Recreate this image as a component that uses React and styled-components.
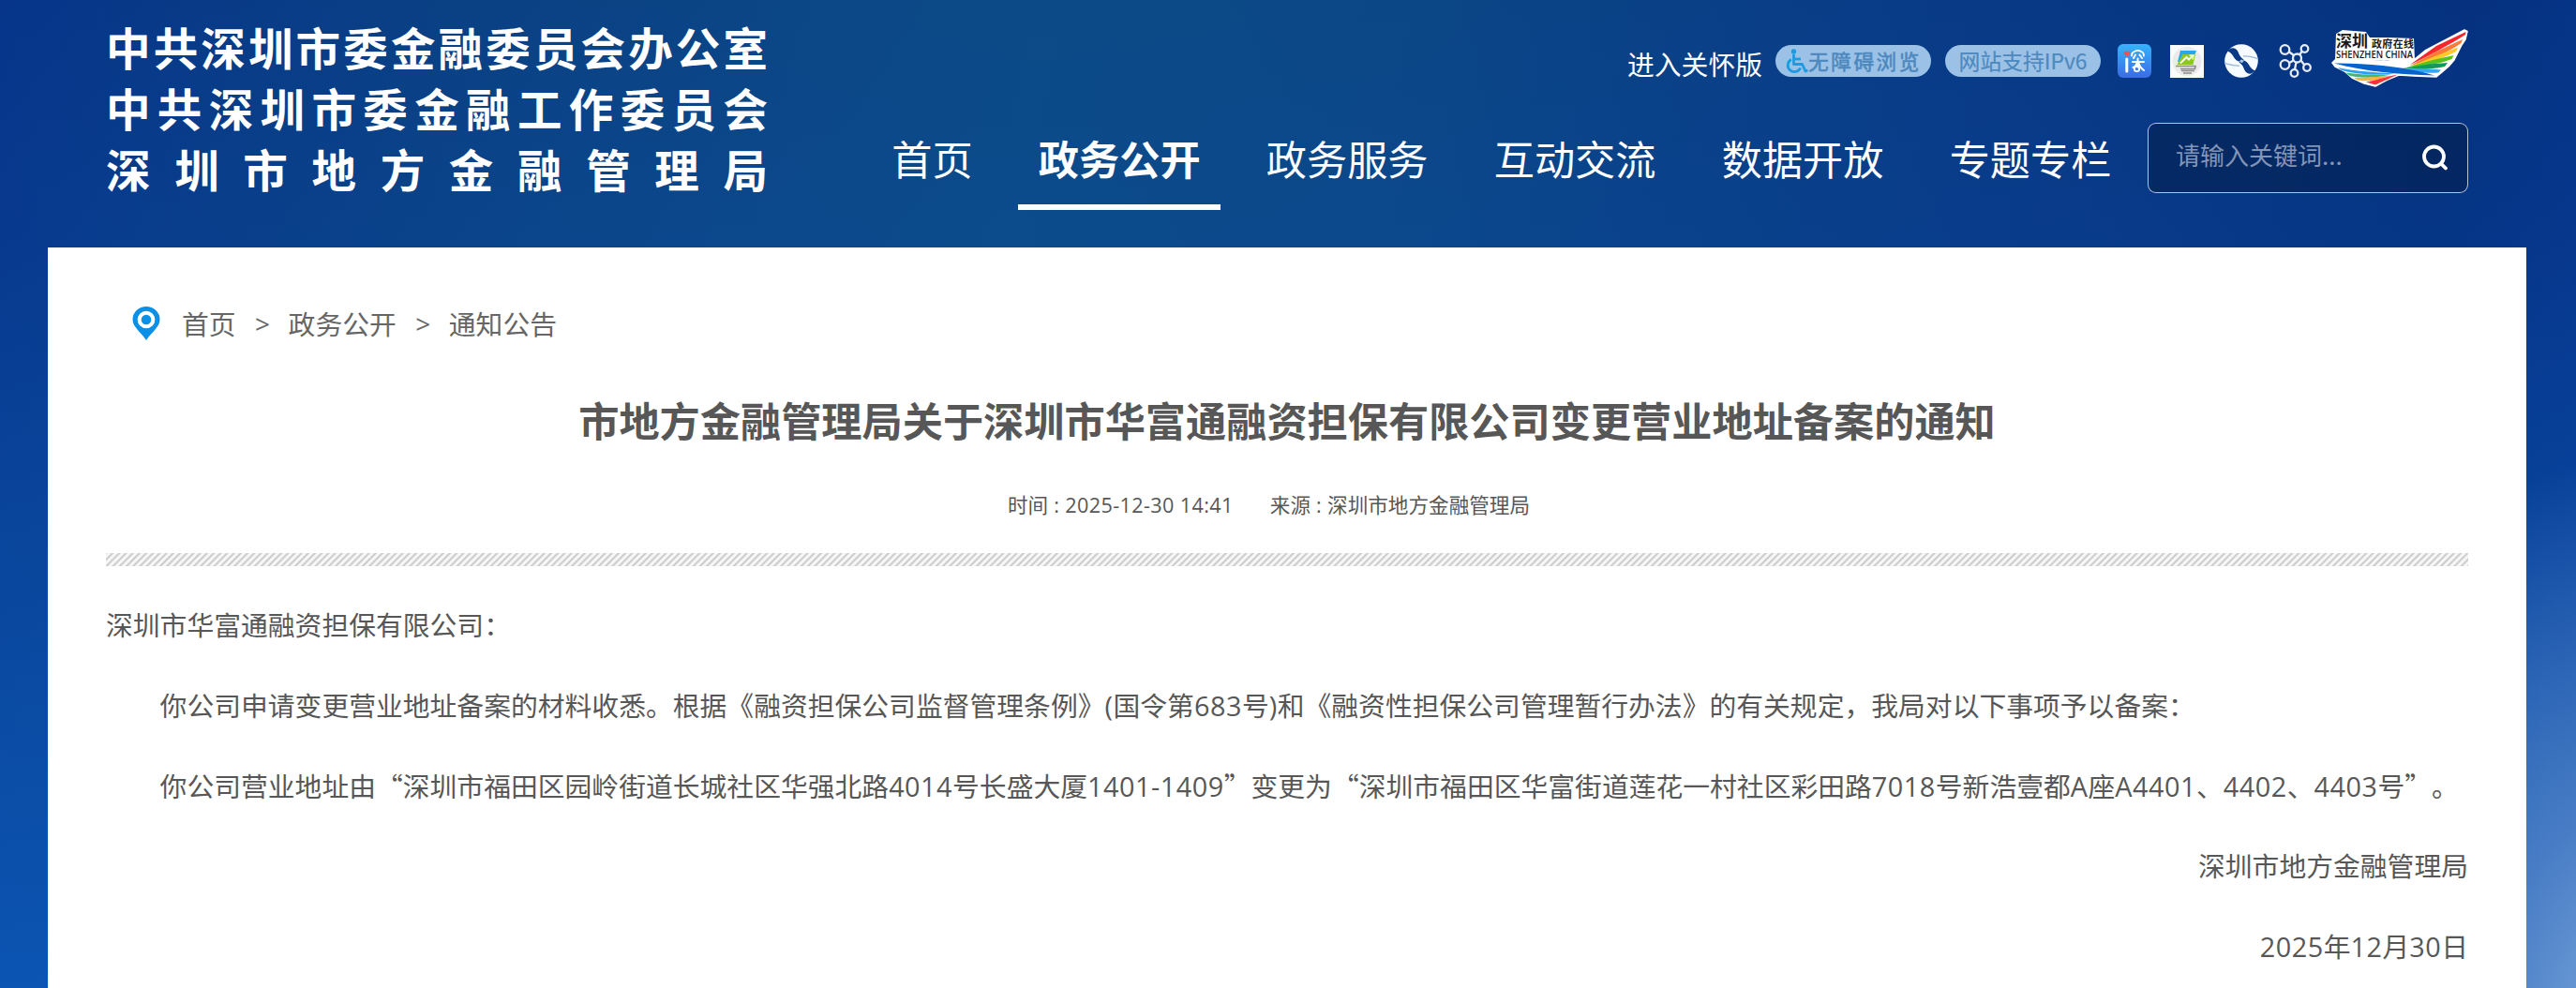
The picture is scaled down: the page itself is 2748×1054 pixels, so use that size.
import React from 'react';
import styled, { createGlobalStyle } from 'styled-components';

const colors = {
  text: '#575757',
  crumb: '#666',
  pill: '#9bc2e6',
  pillText: '#4d88be',
  accent: '#0a90e6'
};

const fonts = {
  base: '"Noto Sans CJK SC", sans-serif',
  latin: '"Open Sans", "Noto Sans CJK SC", sans-serif'
};

const GlobalStyle = createGlobalStyle`
  * {
    box-sizing: border-box;
  }

  body {
    margin: 0;
    font-family: ${fonts.base};
    color: ${colors.text};
    text-spacing-trim: space-all;
    overflow: hidden;
  }

  a {
    color: inherit;
    text-decoration: none;
  }

  svg {
    display: block;
    flex: none;
  }
`;

const Page = styled.div`
  width: 2748px;
  height: 1054px;
  overflow: hidden;
  background:
    radial-gradient(ellipse 330px 640px at 2790px 1130px, #7ba6dc 0%, rgba(84, 134, 202, 0.85) 40%, rgba(50, 104, 182, 0) 100%),
    linear-gradient(180deg, rgba(12, 86, 180, 0) 0%, rgba(12, 86, 180, 0.12) 25%, rgba(12, 86, 180, 0.95) 100%),
    linear-gradient(100deg, #06358a 0%, #0a4084 16%, #0c4a87 38%, #0b4686 52%, #083a86 72%, #05317f 90%, #063690 100%);
`;

const Header = styled.header`
  display: flex;
  justify-content: space-between;
  width: 2520px;
  height: 264px;
  margin-left: 113px;
`;

const Bureau = styled.h1`
  width: 706px;
  margin: 0;
  padding-top: 17px;
  font-size: 47.5px;
  font-weight: 700;
  line-height: 65px;
  color: #fff;
`;

const BureauLine = styled.span`
  display: block;
  text-align: justify;
  text-align-last: justify;
`;

const HeaderSide = styled.div`
  display: flex;
  flex-direction: column;
  align-items: flex-end;
`;

const Tools = styled.div`
  display: flex;
  align-items: center;
  height: 68px;
  margin-top: 31px;
`;

const CareLink = styled.a`
  margin-right: 14px;
  padding-top: 5px;
  font-size: 28.8px;
  line-height: 40px;
  color: #fff;
`;

const Pill = styled.a`
  display: flex;
  align-items: center;
  justify-content: center;
  width: 166px;
  height: 34px;
  margin-right: ${props => props.$gap}px;
  border-radius: 17px;
  background: ${colors.pill};
  color: ${colors.pillText};
  font-size: ${props => props.$size}px;
  letter-spacing: ${props => (props.$spaced ? 2.6 : 0)}px;
  line-height: 34px;
  -webkit-text-stroke: ${props => (props.$spaced ? 0.6 : 0.2)}px ${colors.pillText};
`;

const IconLink = styled.a`
  display: block;
  margin-right: ${props => props.$gap || 0}px;
`;

const LogoLink = styled.a`
  display: block;
  padding-bottom: 6px;
`;

const NavRow = styled.div`
  display: flex;
  align-items: flex-start;
  margin-top: 32px;
`;

const Nav = styled.nav`
  display: flex;
  gap: 27px;
  margin-right: 17px;
`;

const NavItem = styled.a`
  height: 93px;
  padding: 2px 21.6px 0;
  border-bottom: 6px solid ${props => (props.$active ? '#fff' : 'transparent')};
  font-size: 43.2px;
  font-weight: ${props => (props.$active ? 700 : 400)};
  line-height: 71px;
  color: #fff;
`;

const Search = styled.form`
  display: flex;
  align-items: center;
  justify-content: space-between;
  width: 342px;
  height: 75px;
  padding: 0 20px 0 29px;
  border: 1px solid rgba(255, 255, 255, 0.72);
  border-radius: 9px;
  background: rgba(3, 32, 76, 0.6);
`;

const SearchInput = styled.input`
  width: 220px;
  height: 60px;
  margin-bottom: 8px;
  padding: 0;
  border: 0;
  outline: 0;
  background: none;
  font-family: ${fonts.base};
  font-size: 26px;
  color: #fff;

  &::placeholder {
    color: #8295b7;
    opacity: 1;
  }
`;

const Panel = styled.main`
  width: 2644px;
  min-height: 790px;
  margin-left: 51px;
  padding: 0 62px;
  background: #fff;
`;

const Breadcrumb = styled.div`
  display: flex;
  align-items: center;
  height: 102px;
  padding: 60px 0 0 28px;
  font-size: 28.8px;
  line-height: 42px;
  color: ${colors.crumb};
`;

const CrumbText = styled.span`
  margin-left: ${props => props.$left || 0}px;
`;

const CrumbArrow = styled.span`
  width: 16px;
  margin: 0 19.5px 0 20.5px;
  font-family: ${fonts.latin};
  font-size: 28px;
`;

const Title = styled.h2`
  margin: 49px 0 0;
  font-size: 43.2px;
  font-weight: 700;
  line-height: 64px;
  text-align: center;
`;

const Meta = styled.div`
  display: flex;
  justify-content: center;
  gap: 39px;
  height: 32px;
  margin: 43px 39px 0 0;
  font-size: 21.6px;
  line-height: 32px;
`;

const Hatch = styled.div`
  height: 14px;
  margin-top: 36px;
  background: repeating-linear-gradient(135deg, #c4c4c4 0, #f4f4f4 1.6px, #fafafa 3.2px, #c4c4c4 5.09px);
`;

const Article = styled.article`
  padding-top: 33px;
  font-size: 28.8px;
`;

const Paragraph = styled.p`
  margin: 0 0 28.2px;
  line-height: 57.6px;
  text-indent: ${props => (props.$indent ? '2em' : 0)};
  text-align: ${props => (props.$right ? 'right' : 'left')};
  white-space: nowrap;
`;

const Latin = styled.span`
  font-family: ${fonts.latin};
  letter-spacing: 0.018em;
  line-height: 1;
`;

const navItems = ['首页', '政务公开', '政务服务', '互动交流', '数据开放', '专题专栏'];

function WheelchairIcon () {
  return (
    <svg width="25" height="27" viewBox="0 0 25 27" fill="none" stroke="#1d9ae2" strokeWidth="2.8" strokeLinejoin="round">
      <circle cx="9.5" cy="3" r="2.7" fill="#1d9ae2" stroke="none" />
      <path d="M9.5 6v10.5h9l3.5 7.5 2.5-1" />
      <path d="M10 11h7" />
      <path d="M6.8 11.5a7 7 0 1 0 9.8 9" />
    </svg>
  );
}

function IShenzhenIcon () {
  return (
    <svg width="36" height="36" viewBox="0 0 36 36">
      <defs>
        <linearGradient id="appBlue" x1="0" y1="0" x2="0" y2="1">
          <stop offset="0" stopColor="#35b4fb" />
          <stop offset="1" stopColor="#3c6be6" />
        </linearGradient>
      </defs>
      <rect width="36" height="36" rx="6" fill="url(#appBlue)" />
      <path d="M10 13.5 6.8 10.3a1.9 1.9 0 0 1 3.2-2 1.9 1.9 0 0 1 3.2 2z" fill="#f0524f" />
      <g fill="none" stroke="#fff" strokeLinecap="round" strokeLinejoin="round">
        <path d="M9.8 16v13" strokeWidth="3" />
        <path d="M15 12.5c0-2.5 1-4 3-4.5 2.5-1.5 5-1.500 7 0 2 .5 3 2 3 4.500" strokeWidth="1.8" />
        <path d="M19 11.5 17 15M23.5 11.5 26 15M16 19h12M21.5 15.5v9M20.5 20.5c-1 2.5-2 3.5-4 4.5M22.5 20.5c1 3.5 3 6 5.5 7.5" strokeWidth="2" />
        <circle cx="20.5" cy="26.5" r="2.7" strokeWidth="1.8" />
      </g>
    </svg>
  );
}

function ServiceIcon () {
  return (
    <svg width="36" height="35" viewBox="0 0 36 35">
      <rect width="36" height="35" fill="#fbfbfb" />
      <circle cx="18" cy="17.5" r="15.5" fill="#ebebeb" />
      <path d="M11 6h17l-1.5 4H14l-2.5 8H8z" fill="#28a9e6" />
      <path d="M13.5 10H27l-2.500 11H7.500z" fill="#8cc820" />
      <path d="M11 19.5 17.5 13l2.500 2.500 4-4" stroke="#f4fbe4" strokeWidth="2" fill="none" />
      <path d="M20.5 11h4.500l-1 4.500" stroke="#f4fbe4" strokeWidth="1.5" fill="none" />
      <path d="M6 22.5h21l-.5 3H11M12 27.500h14M14 30h9" stroke="#8d8d8d" strokeWidth="1.7" fill="none" />
    </svg>
  );
}

function SwirlIcon () {
  return (
    <svg width="36" height="36" viewBox="0 0 36 36">
      <circle cx="18" cy="18" r="17.8" fill="#f6fbff" />
      <g fill="#0a3a85">
        <path d="M3 7.500C6 4.500 9 3.500 11.500 5c4.500 2.500 3 8 9 11.500-1.500 3-6 3-9-.5C8.500 12.500 8.500 9.500 3 7.500Z" />
        <path d="M33 28.500c-3 3-6 4-8.500 2.500-4.500-2.500-3-8-9-11.500 1.500-3 6-3 9 .5 3 3.500 3 6.500 8.500 8.500Z" />
      </g>
      <path d="M0 20.500c4 1 8 3 16 2.500M36 15.500c-4-1-8-3-16-2.500" stroke="#9db9dc" strokeWidth="1.3" fill="none" />
      <circle cx="18.300" cy="18.300" r="1.800" fill="#a9c6e6" />
    </svg>
  );
}

function NetworkIcon () {
  return (
    <svg width="36" height="36" viewBox="0 0 36 36" fill="none" stroke="#e4ecf7" strokeWidth="2.3">
      <path d="M10.5 8 16 12M24.5 8l-2.500 3.500M10.500 20.500l5-3M23.500 17.500l4 5M18.500 19.500 17 27" />
      <circle cx="6.5" cy="6" r="4.8" />
      <circle cx="27.5" cy="5" r="3.8" />
      <circle cx="19.5" cy="15" r="4.5" />
      <circle cx="6.5" cy="22" r="4.8" />
      <circle cx="30" cy="25" r="3.8" />
      <circle cx="16.5" cy="31" r="3.8" />
    </svg>
  );
}

function CityLogo () {
  return (
    <svg width="146" height="62" viewBox="0 0 146 62">
      <path
        d="M1 36 4 33 60 34 89 32 100 23 142 1 145 2.5 143 11 139 17 135 25 131 33 125 40 118 46 112 51 88 50 72 49 60 54 47 61 35 58 22 52 14 45 4 40Z"
        fill="#fff"
        stroke="#fff"
        strokeWidth="1.5"
        strokeLinejoin="round"
      />
      <path d="M5 5 12 1 24 2 37 3 41 9 60 9 88 10 89 33H4Z" fill="#fff" />
      <path d="M143.5 3 112 18 84 38C104 29 125 17 143 6Z" fill="#f5262c" />
      <path d="M140 11 112 24 84 39C104 34 124 25 138.500 15Z" fill="#fb7a35" />
      <path d="M135 19.5 108 30 84 40C102 37 120 31 133 24Z" fill="#ffc928" />
      <path d="M130.5 28 108 33 80 41C98 40 116 37 128.500 32Z" fill="#56c41c" />
      <path d="M124 36 104 37.5 76 42C94 43.500 110 42.500 121 40Z" fill="#129a5c" />
      <path d="M117 43.5 100 42 74 43C88 46 104 47.500 114 46.500Z" fill="#35a8f2" />
      <path d="M3 36.5C40 36 82 41 110 49.500 74 49 34 45 3 36.500Z" fill="#0862cc" />
      <path d="M7 41C26 45.5 46 46 68 47.500 46 50 24 48 10 43.500Z" fill="#2fa0f0" />
      <path d="M15 46.5C32 49 46 48.500 64 48.500 48 52 32 53 19 49.500Z" fill="#3fb87a" />
      <path d="M24 52C38 52 50 50.500 64 49.500 50 54 40 56.500 28 54.500Z" fill="#fbb040" />
      <path d="M37 56.500C50 54 58 51 71 48.500L47 59.500Z" fill="#f5333a" />
      <g fill="#1a1a1a">
        <text x="5" y="18.500" fontFamily="Noto Sans CJK SC" fontSize="17" fontWeight="700" textLength="34">深圳</text>
        <text x="43" y="19.500" fontFamily="Noto Sans CJK SC" fontSize="11" fontWeight="700" textLength="45">政府在线</text>
        <text x="5" y="30.500" fontFamily="Open Sans" fontSize="9.800" fontWeight="600" textLength="82" lengthAdjust="spacingAndGlyphs">SHENZHEN CHINA</text>
      </g>
    </svg>
  );
}

function SearchIcon () {
  return (
    <svg width="29" height="29" viewBox="0 0 29 29" fill="none" stroke="#fff" strokeWidth="3.8" strokeLinecap="round">
      <circle cx="13.5" cy="13" r="10.5" />
      <path d="m21.5 21 4.5 4.5" />
    </svg>
  );
}

function PinIcon () {
  return (
    <svg width="30" height="36" viewBox="0 0 30 36">
      <path d="M15 36C10 28 .5 22 .5 14a14.500 14 0 0 1 29 0C29.500 22 20 28 15 36Z" fill={colors.accent} />
      <circle cx="15" cy="14" r="7.3" fill={colors.accent} stroke="#fff" strokeWidth="4" />
    </svg>
  );
}

/**
 * Renders the notice page
 * @returns {JSX} react jsx
 */
export default function App () {
  return (
    <Page lang="zh-CN">
      <GlobalStyle />
      <Header>
        <Bureau>
          <BureauLine>中共深圳市委金融委员会办公室</BureauLine>
          <BureauLine>中共深圳市委金融工作委员会</BureauLine>
          <BureauLine>深圳市地方金融管理局</BureauLine>
        </Bureau>
        <HeaderSide>
          <Tools>
            <CareLink href="#">进入关怀版</CareLink>
            <Pill href="#" $gap={15} $size={21.5} $spaced>
              <WheelchairIcon />
              无障碍浏览
            </Pill>
            <Pill href="#" $gap={18} $size={22.8}>网站支持IPv6</Pill>
            <IconLink href="#" $gap={20}><IShenzhenIcon /></IconLink>
            <IconLink href="#" $gap={22}><ServiceIcon /></IconLink>
            <IconLink href="#" $gap={22}><SwirlIcon /></IconLink>
            <IconLink href="#" $gap={20}><NetworkIcon /></IconLink>
            <LogoLink href="#"><CityLogo /></LogoLink>
          </Tools>
          <NavRow>
            <Nav>
              {navItems.map(item => (
                <NavItem key={item} href="#" $active={item === '政务公开'}>{item}</NavItem>
              ))}
            </Nav>
            <Search>
              <SearchInput placeholder="请输入关键词..." />
              <SearchIcon />
            </Search>
          </NavRow>
        </HeaderSide>
      </Header>
      <Panel>
        <Breadcrumb>
          <PinIcon />
          <CrumbText $left={23}>首页</CrumbText>
          <CrumbArrow>&gt;</CrumbArrow>
          <CrumbText>政务公开</CrumbText>
          <CrumbArrow>&gt;</CrumbArrow>
          <CrumbText>通知公告</CrumbText>
        </Breadcrumb>
        <Title>市地方金融管理局关于深圳市华富通融资担保有限公司变更营业地址备案的通知</Title>
        <Meta>
          <span>时间<Latin> : 2025-12-30 14:41</Latin></span>
          <span>来源<Latin> : </Latin>深圳市地方金融管理局</span>
        </Meta>
        <Hatch />
        <Article>
          <Paragraph>深圳市华富通融资担保有限公司：</Paragraph>
          <Paragraph $indent>
            你公司申请变更营业地址备案的材料收悉。根据《融资担保公司监督管理条例》<Latin>(</Latin>国令第<Latin>683</Latin>号<Latin>)</Latin>和《融资性担保公司管理暂行办法》的有关规定，我局对以下事项予以备案：
          </Paragraph>
          <Paragraph $indent>
            你公司营业地址由“深圳市福田区园岭街道长城社区华强北路<Latin>4014</Latin>号长盛大厦<Latin>1401-1409</Latin>”变更为“深圳市福田区华富街道莲花一村社区彩田路<Latin>7018</Latin>号新浩壹都<Latin>A</Latin>座<Latin>A4401</Latin>、<Latin>4402</Latin>、<Latin>4403</Latin>号”。
          </Paragraph>
          <Paragraph $right>深圳市地方金融管理局</Paragraph>
          <Paragraph $right><Latin>2025</Latin>年<Latin>12</Latin>月<Latin>30</Latin>日</Paragraph>
        </Article>
      </Panel>
    </Page>
  );
}
